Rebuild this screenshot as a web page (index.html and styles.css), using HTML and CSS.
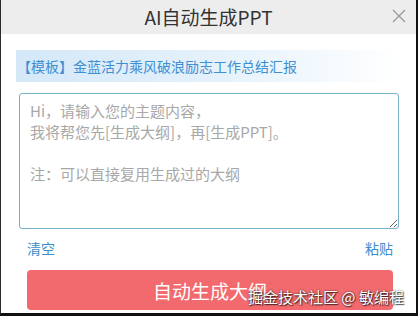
FILE: index.html
```html
<!DOCTYPE html>
<html lang="zh-CN">

<head>
  <meta charset="UTF-8" />
  <meta name="viewport" content="width=device-width, initial-scale=1.0" />
  <title>AI自动生成PPT</title>
  <link rel="stylesheet" href="styles.css">
</head>

<body>
  <div class="dialog">
    <!-- Header -->
    <div class="dialog-header">
      <h1 class="dialog-title">AI自动生成PPT</h1>
      <span class="close-button">
        <svg width="14" height="14" viewBox="0 0 14 14">
          <path d="M1 1 L13 13 M13 1 L1 13" stroke="#9a9a9a" stroke-width="1.3" fill="none" />
        </svg>
      </span>
    </div>

    <div class="dialog-body">
      <div class="template-bar">【模板】金蓝活力乘风破浪励志工作总结汇报</div>

      <textarea class="topic-input"
        placeholder="Hi，请输入您的主题内容，&#10;我将帮您先[生成大纲]，再[生成PPT]。&#10;&#10;注：可以直接复用生成过的大纲"></textarea>

      <div class="action-links">
        <span class="link">清空</span>
        <span class="link">粘贴</span>
      </div>

      <button class="generate-button">自动生成大纲</button>
    </div>

    <div class="watermark">掘金技术社区 @ 敏编程</div>
  </div>
</body>

</html>
```

FILE: styles.css
```css
/* Reset */
* {
  margin: 0;
  padding: 0;
  box-sizing: border-box;
}

body {
  width: 418px;
  height: 316px;
  background: #111;
  font-family: "Noto Sans CJK SC", "Noto Sans", sans-serif;
  overflow: hidden;
}

/* Dialog frame */
.dialog {
  position: relative;
  width: 418px;
  height: 316px;
  background: #fff;
  border-left: 1px solid #2a2a2a;
  border-right: 2px solid #111;
  border-bottom: 3px solid #111;
}

.dialog-header {
  position: relative;
  height: 34px;
  background: #ededed;
  display: flex;
  justify-content: center;
  align-items: center;
}

.dialog-title {
  font-size: 19px;
  font-weight: normal;
  color: #333;
  line-height: 34px;
}

.close-button {
  position: absolute;
  right: 10px;
  top: 9px;
  display: flex;
}

/* Body */
.dialog-body {
  padding: 16px 15px 0;
  display: flex;
  flex-direction: column;
}

.template-bar {
  height: 32px;
  line-height: 32px;
  padding-left: 1px;
  font-size: 14px;
  color: #3f8fd2;
  background: linear-gradient(90deg, #d4e8f8 0%, #e4f1fb 50%, #ffffff 100%);
  white-space: nowrap;
}

.topic-input {
  margin: 11px 2px 0 3px;
  height: 136px;
  padding: 6px 10px;
  font-family: inherit;
  font-size: 15px;
  line-height: 21px;
  color: #333;
  border: 1px solid #78b4c9;
  border-radius: 3px;
  resize: vertical;
  outline: none;
}

.topic-input::placeholder {
  color: #a8a8a8;
}

.action-links {
  display: flex;
  justify-content: space-between;
  padding: 0 8px 0 11px;
  margin-top: 9px;
  font-size: 14px;
  line-height: 20px;
  color: #3c8dcb;
}

.link {
  cursor: pointer;
}

.generate-button {
  margin: 12px 8px 0 11px;
  height: 40px;
  border: none;
  border-radius: 4px;
  background: #f26a6d;
  color: #fff;
  font-family: inherit;
  font-size: 19px;
  cursor: pointer;
}

/* Watermark */
.watermark {
  position: absolute;
  left: 247px;
  top: 287px;
  font-size: 15px;
  line-height: 20px;
  color: #fff;
  text-shadow: 0 0 2px rgba(0, 0, 0, 0.8), 1px 1px 1px rgba(0, 0, 0, 0.6);
  white-space: nowrap;
}
```
